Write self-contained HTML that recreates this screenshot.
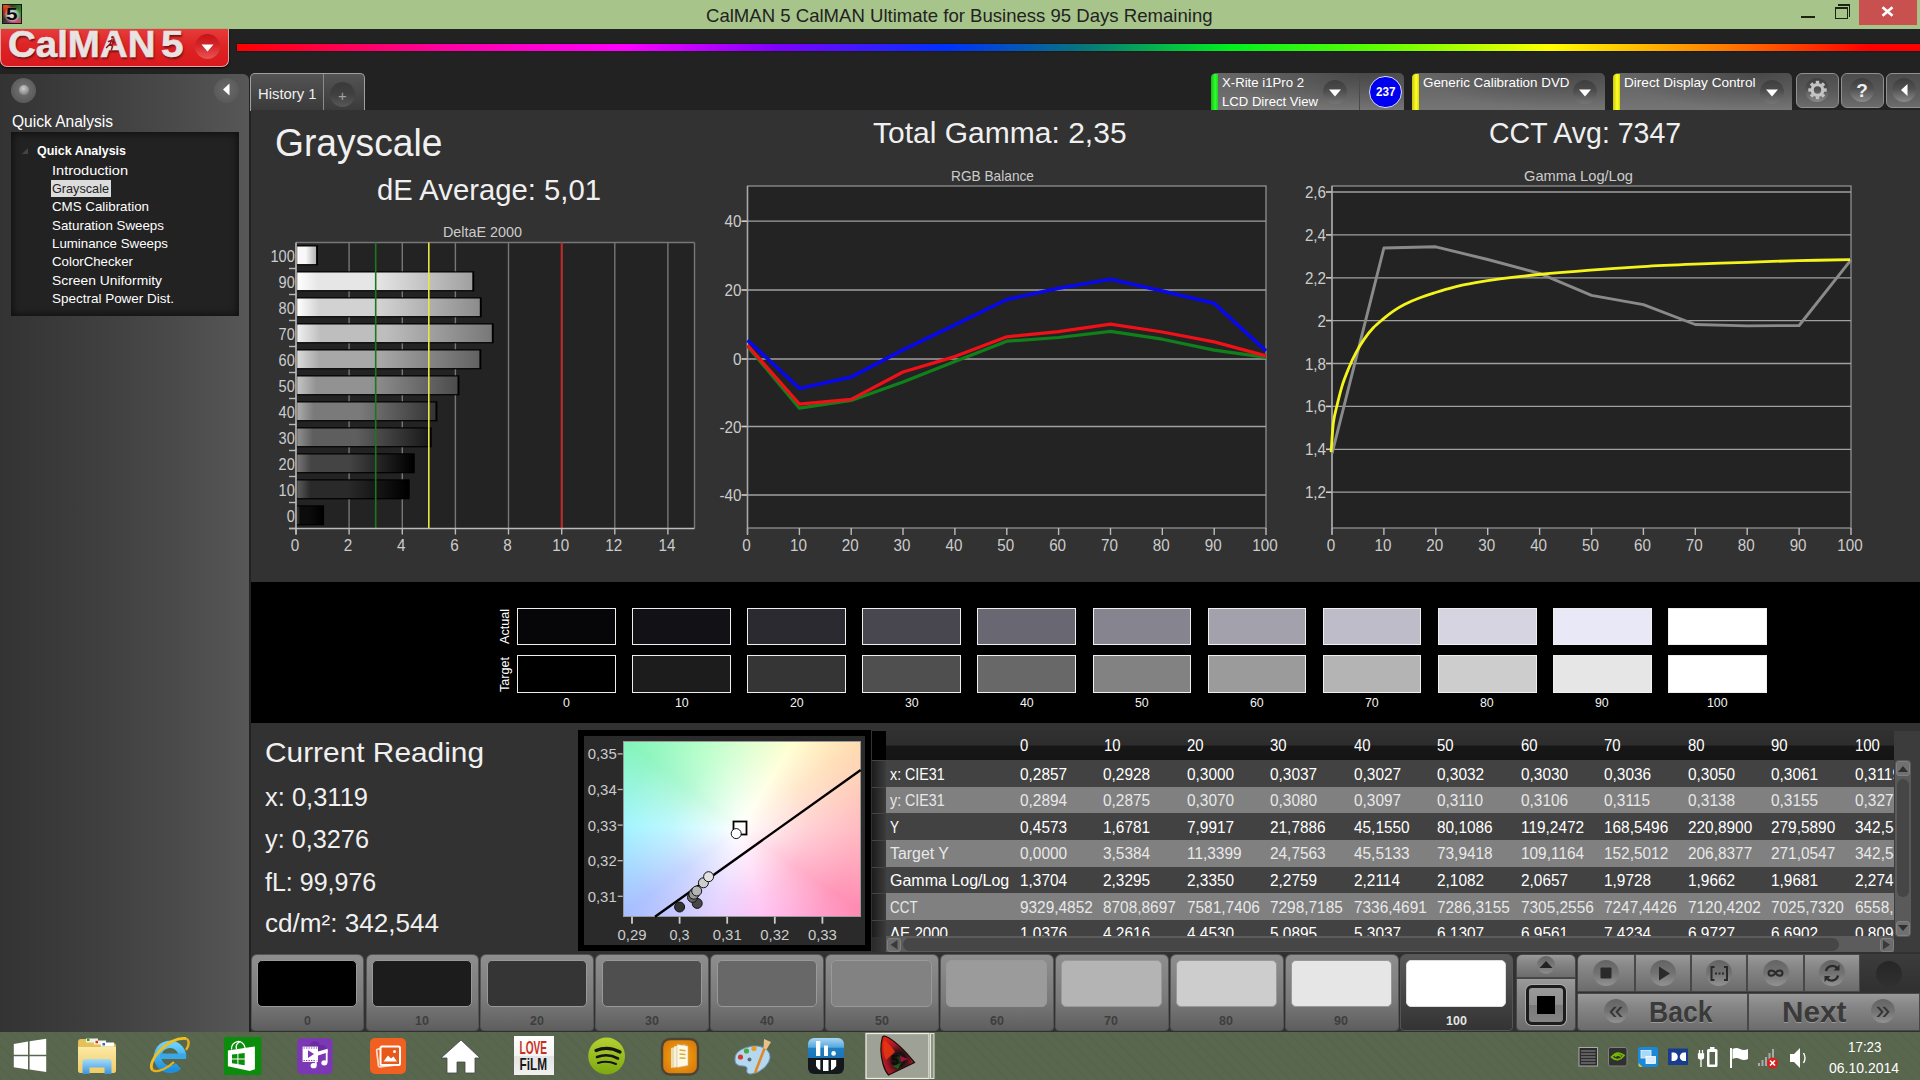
<!DOCTYPE html>
<html lang="en"><head><meta charset="utf-8"><title>CalMAN 5 CalMAN Ultimate for Business 95 Days Remaining</title>
<style>
html,body{margin:0;padding:0;width:1920px;height:1080px;overflow:hidden;background:#222;font-family:"Liberation Sans",sans-serif;}
.a{position:absolute;box-sizing:border-box;}
.t{position:absolute;white-space:nowrap;line-height:1;transform-origin:0 0;}
svg{position:absolute;left:0;top:0;overflow:visible;}
svg text{font-family:"Liberation Sans",sans-serif;}
</style></head><body>

<div class="a" style="left:0;top:0;width:1920px;height:29px;background:#a7c58b;"></div>
<div class="a" style="left:0;top:29px;width:1920px;height:1004px;background:#222222;"></div>
<div class="a" style="left:2px;top:4px;width:20px;height:20px;background:radial-gradient(circle at 50% 55%,#eee 0%,#ccc 30%,rgba(200,200,200,0) 62%),conic-gradient(from 0deg,#304020,#38a030 25%,#e04070 42%,#803060 55%,#303030 65%,#c02010 80%,#e05020 90%,#304020);border:1px solid #181818;"></div>
<span class="t" style="left:5.5px;top:6.1px;font-size:17px;color:#080808;font-weight:bold;transform:scaleX(1.216);">5</span>
<span class="t" style="left:706.0px;top:5.6px;font-size:19px;color:#222;transform:scaleX(0.977);">CalMAN 5 CalMAN Ultimate for Business 95 Days Remaining</span>
<div class="a" style="left:1801px;top:16px;width:14px;height:2.200px;background:#1c2414;"></div>
<div class="a" style="left:1837.500px;top:4.200px;width:12.500px;height:12.500px;border-top:2px solid #1c2414;border-right:1.200px solid #1c2414;"></div>
<div class="a" style="left:1835px;top:7.300px;width:12.500px;height:11.300px;border:1.200px solid #1c2414;border-top:2.600px solid #1c2414;background:#a7c58b;"></div>
<div class="a" style="left:1859px;top:0;width:58px;height:24.500px;background:#c8504f;"></div>
<svg width="1920" height="30"><path d="M1882.500 7.300 L1892.500 15.700 M1892.500 7.300 L1882.500 15.700" stroke="#fff" stroke-width="2.700" fill="none"/></svg>
<div class="a" style="left:0;top:29px;width:229px;height:38px;border-radius:0 0 7px 7px;background:linear-gradient(#e63c3c 0%,#de2424 45%,#d81a1e 100%);border:1px solid #e8a0a0;border-top:none;box-shadow:0 1px 2px #000;"></div>
<span class="t" style="left:7.8px;top:27.2px;font-size:36.3px;color:#e8e2e2;font-weight:bold;transform:scaleX(1.060);-webkit-text-stroke:0.6px #e8e2e2;text-shadow:1px 2px 2px #701010;">CalMAN</span>
<span class="t" style="left:160.8px;top:27.2px;font-size:36.3px;color:#e8e2e2;font-weight:bold;transform:scaleX(1.114);-webkit-text-stroke:0.6px #e8e2e2;text-shadow:1px 2px 2px #701010;">5</span>
<div class="a" style="left:195px;top:34px;width:25px;height:25px;border-radius:50%;background:linear-gradient(#c41418 0%,#d42428 45%,#ea5454 100%);"></div>
<svg width="300" height="80"><path d="M201.500 44.500 L213.500 44.500 L207.500 51.500 Z" fill="#fff"/><g stroke="#8a1818" stroke-width="1.500" fill="none" stroke-linecap="round"><circle cx="112.500" cy="37.300" r="1.300" fill="#8a1818" stroke="none"/><path d="M112 39.500 L110 44 L112.500 46.500 L111.500 49.500 M110 44 L106.500 47.500 M108.500 41.500 L111.500 40.500 L114.500 42.500"/></g></svg>
<div class="a" style="left:237px;top:44px;width:1683px;height:7px;background:linear-gradient(90deg,#f00 0%,#ff00a0 12%,#ff00ff 23%,#8000ff 32%,#0030ff 42%,#087878 50.500%,#00f020 59%,#60ff00 68%,#ffff00 78%,#ff8000 88%,#ff0000 97%,#ff0000 100%);box-shadow:0 0 2px rgba(0,0,0,.6);"></div>
<div class="a" style="left:0;top:74px;width:249px;height:959px;border-radius:0 6px 0 0;background:linear-gradient(90deg,#333 0%,#3f3f3f 40%,#4c4c4c 75%,#575757 100%);"></div>
<div class="a" style="left:11px;top:78px;width:25px;height:25px;border-radius:50%;background:radial-gradient(circle at 50% 45%,#777 0%,#5e5e5e 60%,#585858 100%);"></div>
<div class="a" style="left:19px;top:85px;width:10px;height:10px;border-radius:50%;background:radial-gradient(circle at 45% 35%,#ccc,#888 70%,#777);"></div>
<div class="a" style="left:214px;top:78px;width:25px;height:25px;border-radius:50%;background:radial-gradient(circle at 50% 45%,#6a6a6a 0%,#5a5a5a 70%,#555 100%);"></div>
<svg width="260" height="120"><path d="M223 89.5 L229.5 83.5 L229.5 95.5 Z" fill="#fff"/></svg>
<span class="t" style="left:11.7px;top:113.5px;font-size:16px;color:#fff;transform:scaleX(0.971);">Quick Analysis</span>
<div class="a" style="left:11px;top:132px;width:228px;height:184px;background:#222;box-shadow:inset 0 0 6px 2px #111;"></div>
<svg width="260" height="330"><path d="M28 148 L28 154 L22 154 Z" fill="#444"/></svg>
<span class="t" style="left:36.7px;top:144.0px;font-size:13px;color:#fff;font-weight:bold;transform:scaleX(0.960);">Quick Analysis</span>
<span class="t" style="left:52.0px;top:164.0px;font-size:13px;color:#fff;transform:scaleX(1.119);">Introduction</span>
<div class="a" style="left:51px;top:180px;width:60px;height:17px;background:#dcdcdc;"></div>
<span class="t" style="left:52.0px;top:182.3px;font-size:13px;color:#222;transform:scaleX(0.974);">Grayscale</span>
<span class="t" style="left:52.0px;top:200.0px;font-size:13px;color:#fff;transform:scaleX(1.025);">CMS Calibration</span>
<span class="t" style="left:52.0px;top:219.0px;font-size:13px;color:#fff;transform:scaleX(1.026);">Saturation Sweeps</span>
<span class="t" style="left:52.0px;top:237.3px;font-size:13px;color:#fff;transform:scaleX(1.022);">Luminance Sweeps</span>
<span class="t" style="left:52.0px;top:255.0px;font-size:13px;color:#fff;transform:scaleX(1.019);">ColorChecker</span>
<span class="t" style="left:52.0px;top:274.0px;font-size:13px;color:#fff;transform:scaleX(1.065);">Screen Uniformity</span>
<span class="t" style="left:52.0px;top:292.3px;font-size:13px;color:#fff;transform:scaleX(1.036);">Spectral Power Dist.</span>
<div class="a" style="left:250px;top:73px;width:115px;height:38px;border-radius:5px 5px 0 0;background:linear-gradient(#545454,#3a3a3a);border:1.300px solid #a0a0a0;border-bottom:none;"></div>
<div class="a" style="left:322.800px;top:74px;width:1.300px;height:36px;background:#8c8c8c;"></div>
<span class="t" style="left:257.7px;top:86.3px;font-size:15px;color:#eee;transform:scaleX(0.988);">History 1</span>
<div class="a" style="left:330px;top:82px;width:25px;height:25px;border-radius:50%;background:linear-gradient(#3a3a3a,#404040 50%,#585858);"></div>
<span class="t" style="left:338.0px;top:87.8px;font-size:15px;color:#a0a0a0;">+</span>
<div class="a" style="left:1211px;top:73px;width:193px;height:37px;border-radius:5px 5px 0 0;background:radial-gradient(ellipse 75% 100% at 80% 0%,rgba(0,0,0,.30) 0%,rgba(0,0,0,.12) 55%,rgba(0,0,0,0) 100%),linear-gradient(#666 0%,#6a6a6a 50%,#757575 100%);"></div>
<div class="a" style="left:1211px;top:74px;width:7px;height:36px;border-radius:4px 0 0 0;background:linear-gradient(90deg,#10c010,#30ff30 60%,#20d020);"></div>
<span class="t" style="left:1222.0px;top:76.3px;font-size:13px;color:#fff;transform:scaleX(1.013);">X-Rite i1Pro 2</span>
<span class="t" style="left:1222.0px;top:95.3px;font-size:13px;color:#fff;transform:scaleX(1.009);">LCD Direct View</span>
<div class="a" style="left:1323px;top:80px;width:24px;height:24px;border-radius:50%;background:linear-gradient(#3e3e3e 0%,#4a4a4a 40%,#767676 100%);"></div><svg width="1920" height="120"><path d="M1329 89.5 L1341 89.5 L1335 96.5 Z" fill="#fff"/></svg>
<div class="a" style="left:1359px;top:76px;width:1px;height:34px;background:#4a4a4a;"></div>
<div class="a" style="left:1369px;top:75.500px;width:32.500px;height:32.500px;border-radius:50%;background:#0000f0;border:1.500px solid #dde;"></div>
<span class="t" style="left:1375.5px;top:85.8px;font-size:12px;color:#fff;font-weight:bold;transform:scaleX(0.974);">237</span>
<div class="a" style="left:1412px;top:73px;width:193px;height:37px;border-radius:5px 5px 0 0;background:radial-gradient(ellipse 75% 100% at 80% 0%,rgba(0,0,0,.30) 0%,rgba(0,0,0,.12) 55%,rgba(0,0,0,0) 100%),linear-gradient(#666 0%,#6a6a6a 50%,#757575 100%);"></div>
<div class="a" style="left:1412px;top:74px;width:7px;height:36px;border-radius:4px 0 0 0;background:linear-gradient(90deg,#c8c800,#ffff30 60%,#d8d800);"></div>
<span class="t" style="left:1422.7px;top:76.3px;font-size:13px;color:#fff;transform:scaleX(1.029);">Generic Calibration DVD</span>
<div class="a" style="left:1573px;top:80px;width:24px;height:24px;border-radius:50%;background:linear-gradient(#3e3e3e 0%,#4a4a4a 40%,#767676 100%);"></div><svg width="1920" height="120"><path d="M1579 89.5 L1591 89.5 L1585 96.5 Z" fill="#fff"/></svg>
<div class="a" style="left:1613px;top:73px;width:179px;height:37px;border-radius:5px 5px 0 0;background:radial-gradient(ellipse 75% 100% at 80% 0%,rgba(0,0,0,.30) 0%,rgba(0,0,0,.12) 55%,rgba(0,0,0,0) 100%),linear-gradient(#666 0%,#6a6a6a 50%,#757575 100%);"></div>
<div class="a" style="left:1613px;top:74px;width:7px;height:36px;border-radius:4px 0 0 0;background:linear-gradient(90deg,#c8c800,#ffff30 60%,#d8d800);"></div>
<span class="t" style="left:1624.3px;top:76.3px;font-size:13px;color:#fff;transform:scaleX(1.046);">Direct Display Control</span>
<div class="a" style="left:1760px;top:80px;width:24px;height:24px;border-radius:50%;background:linear-gradient(#3e3e3e 0%,#4a4a4a 40%,#767676 100%);"></div><svg width="1920" height="120"><path d="M1766 89.5 L1778 89.5 L1772 96.5 Z" fill="#fff"/></svg>
<div class="a" style="left:1796px;top:73px;width:43px;height:35px;border-radius:6px;background:linear-gradient(#4c4c4c 0%,#585858 50%,#6c6c6c 100%);border:1.500px solid #909090;"></div>
<div class="a" style="left:1841px;top:73px;width:43px;height:35px;border-radius:6px;background:linear-gradient(#4c4c4c 0%,#585858 50%,#6c6c6c 100%);border:1.500px solid #909090;"></div>
<div class="a" style="left:1886px;top:73px;width:43px;height:35px;border-radius:6px;background:linear-gradient(#4c4c4c 0%,#585858 50%,#6c6c6c 100%);border:1.500px solid #909090;"></div>
<div class="a" style="left:1805px;top:78px;width:24px;height:24px;border-radius:50%;background:linear-gradient(#3e3e3e 0%,#505050 45%,#8a8a8a 100%);"></div>
<div class="a" style="left:1850px;top:78px;width:24px;height:24px;border-radius:50%;background:linear-gradient(#3e3e3e 0%,#505050 45%,#8a8a8a 100%);"></div>
<div class="a" style="left:1892px;top:78px;width:24px;height:24px;border-radius:50%;background:linear-gradient(#3e3e3e 0%,#505050 45%,#8a8a8a 100%);"></div>
<svg width="1920" height="120"><g transform="translate(1817.5,90)" fill="none" stroke="#c4c4c4"><circle r="5.300" stroke-width="3.200"/><g stroke-width="3.400"><path d="M0 -6.500 L0 -9.200" transform="rotate(0)"/><path d="M0 -6.500 L0 -9.200" transform="rotate(45)"/><path d="M0 -6.500 L0 -9.200" transform="rotate(90)"/><path d="M0 -6.500 L0 -9.200" transform="rotate(135)"/><path d="M0 -6.500 L0 -9.200" transform="rotate(180)"/><path d="M0 -6.500 L0 -9.200" transform="rotate(225)"/><path d="M0 -6.500 L0 -9.200" transform="rotate(270)"/><path d="M0 -6.500 L0 -9.200" transform="rotate(315)"/></g></g><path d="M1901 90 L1907.5 84 L1907.5 96 Z" fill="#fff"/></svg>
<span class="t" style="left:1856.2px;top:80.9px;font-size:19px;color:#eee;font-weight:bold;">?</span>
<div class="a" style="left:251px;top:110px;width:1669px;height:472px;background:#323232;"></div>
<span class="t" style="left:275.0px;top:124.1px;font-size:38px;color:#f0f0f0;transform:scaleX(0.979);">Grayscale</span>
<span class="t" style="left:377.0px;top:176.0px;font-size:29px;color:#f0f0f0;transform:scaleX(1.009);">dE Average: 5,01</span>
<span class="t" style="left:873.0px;top:118.7px;font-size:29px;color:#f0f0f0;transform:scaleX(1.035);">Total Gamma: 2,35</span>
<span class="t" style="left:1489.0px;top:118.7px;font-size:29px;color:#f0f0f0;transform:scaleX(0.982);">CCT Avg: 7347</span>
<svg width="1920" height="600">
<defs>
<linearGradient id="b0" x1="0" x2="1" y1="0" y2="0"><stop offset="0" stop-color="#ffffff"/><stop offset="0.120" stop-color="#f8f8f8"/><stop offset="0.450" stop-color="#f8f8f8"/><stop offset="1" stop-color="#b2b2b2"/></linearGradient>
<linearGradient id="b1" x1="0" x2="1" y1="0" y2="0"><stop offset="0" stop-color="#ffffff"/><stop offset="0.120" stop-color="#e6e6e6"/><stop offset="0.450" stop-color="#e6e6e6"/><stop offset="1" stop-color="#a0a0a0"/></linearGradient>
<linearGradient id="b2" x1="0" x2="1" y1="0" y2="0"><stop offset="0" stop-color="#ffffff"/><stop offset="0.120" stop-color="#d2d2d2"/><stop offset="0.450" stop-color="#d2d2d2"/><stop offset="1" stop-color="#8c8c8c"/></linearGradient>
<linearGradient id="b3" x1="0" x2="1" y1="0" y2="0"><stop offset="0" stop-color="#f0f0f0"/><stop offset="0.120" stop-color="#bebebe"/><stop offset="0.450" stop-color="#bebebe"/><stop offset="1" stop-color="#787878"/></linearGradient>
<linearGradient id="b4" x1="0" x2="1" y1="0" y2="0"><stop offset="0" stop-color="#dadada"/><stop offset="0.120" stop-color="#a8a8a8"/><stop offset="0.450" stop-color="#a8a8a8"/><stop offset="1" stop-color="#626262"/></linearGradient>
<linearGradient id="b5" x1="0" x2="1" y1="0" y2="0"><stop offset="0" stop-color="#c4c4c4"/><stop offset="0.120" stop-color="#929292"/><stop offset="0.450" stop-color="#929292"/><stop offset="1" stop-color="#4c4c4c"/></linearGradient>
<linearGradient id="b6" x1="0" x2="1" y1="0" y2="0"><stop offset="0" stop-color="#acacac"/><stop offset="0.120" stop-color="#7a7a7a"/><stop offset="0.450" stop-color="#7a7a7a"/><stop offset="1" stop-color="#343434"/></linearGradient>
<linearGradient id="b7" x1="0" x2="1" y1="0" y2="0"><stop offset="0" stop-color="#909090"/><stop offset="0.120" stop-color="#5e5e5e"/><stop offset="0.450" stop-color="#5e5e5e"/><stop offset="1" stop-color="#181818"/></linearGradient>
<linearGradient id="b8" x1="0" x2="1" y1="0" y2="0"><stop offset="0" stop-color="#767676"/><stop offset="0.120" stop-color="#444"/><stop offset="0.450" stop-color="#444"/><stop offset="1" stop-color="#000000"/></linearGradient>
<linearGradient id="b9" x1="0" x2="1" y1="0" y2="0"><stop offset="0" stop-color="#5c5c5c"/><stop offset="0.120" stop-color="#2a2a2a"/><stop offset="0.450" stop-color="#2a2a2a"/><stop offset="1" stop-color="#000000"/></linearGradient>
<linearGradient id="b10" x1="0" x2="1" y1="0" y2="0"><stop offset="0" stop-color="#3e3e3e"/><stop offset="0.120" stop-color="#0c0c0c"/><stop offset="0.450" stop-color="#0c0c0c"/><stop offset="1" stop-color="#000000"/></linearGradient>
</defs>
<rect x="296.0" y="242.5" width="398.5" height="286.0" fill="#232323"/>
<path d="M349.1 242.5 V528.5" stroke="#777" stroke-width="1.4"/>
<path d="M402.3 242.5 V528.5" stroke="#777" stroke-width="1.4"/>
<path d="M455.4 242.5 V528.5" stroke="#777" stroke-width="1.4"/>
<path d="M508.5 242.5 V528.5" stroke="#777" stroke-width="1.4"/>
<path d="M561.7 242.5 V528.5" stroke="#777" stroke-width="1.4"/>
<path d="M614.8 242.5 V528.5" stroke="#777" stroke-width="1.4"/>
<path d="M667.9 242.5 V528.5" stroke="#777" stroke-width="1.4"/>
<path d="M694.5 242.5 V528.5" stroke="#777" stroke-width="1.4"/>
<path d="M296.0 242.5 H694.5" stroke="#777" stroke-width="1.4"/>
<rect x="296.5" y="245.3" width="21.5" height="20" fill="#000"/>
<rect x="297.2" y="246.5" width="18.9" height="17.600" fill="url(#b0)"/>
<path d="M289.0 268.5 H296.0" stroke="#bbb" stroke-width="1.4"/>
<text x="294.8" y="261.7" font-size="16" fill="#ccc" text-anchor="end" textLength="24.3" lengthAdjust="spacingAndGlyphs">100</text>
<rect x="296.5" y="271.3" width="177.7" height="20" fill="#000"/>
<rect x="297.2" y="272.5" width="175.1" height="17.600" fill="url(#b1)"/>
<path d="M289.0 294.5 H296.0" stroke="#bbb" stroke-width="1.4"/>
<text x="294.8" y="287.7" font-size="16" fill="#ccc" text-anchor="end" textLength="16.2" lengthAdjust="spacingAndGlyphs">90</text>
<rect x="296.5" y="297.3" width="185.2" height="20" fill="#000"/>
<rect x="297.2" y="298.5" width="182.6" height="17.600" fill="url(#b2)"/>
<path d="M289.0 320.5 H296.0" stroke="#bbb" stroke-width="1.4"/>
<text x="294.8" y="313.7" font-size="16" fill="#ccc" text-anchor="end" textLength="16.2" lengthAdjust="spacingAndGlyphs">80</text>
<rect x="296.5" y="323.3" width="197.2" height="20" fill="#000"/>
<rect x="297.2" y="324.5" width="194.6" height="17.600" fill="url(#b3)"/>
<path d="M289.0 346.5 H296.0" stroke="#bbb" stroke-width="1.4"/>
<text x="294.8" y="339.7" font-size="16" fill="#ccc" text-anchor="end" textLength="16.2" lengthAdjust="spacingAndGlyphs">70</text>
<rect x="296.5" y="349.3" width="184.8" height="20" fill="#000"/>
<rect x="297.2" y="350.5" width="182.2" height="17.600" fill="url(#b4)"/>
<path d="M289.0 372.5 H296.0" stroke="#bbb" stroke-width="1.4"/>
<text x="294.8" y="365.7" font-size="16" fill="#ccc" text-anchor="end" textLength="16.2" lengthAdjust="spacingAndGlyphs">60</text>
<rect x="296.5" y="375.3" width="162.9" height="20" fill="#000"/>
<rect x="297.2" y="376.5" width="160.3" height="17.600" fill="url(#b5)"/>
<path d="M289.0 398.5 H296.0" stroke="#bbb" stroke-width="1.4"/>
<text x="294.8" y="391.7" font-size="16" fill="#ccc" text-anchor="end" textLength="16.2" lengthAdjust="spacingAndGlyphs">50</text>
<rect x="296.5" y="401.3" width="140.9" height="20" fill="#000"/>
<rect x="297.2" y="402.5" width="138.3" height="17.600" fill="url(#b6)"/>
<path d="M289.0 424.5 H296.0" stroke="#bbb" stroke-width="1.4"/>
<text x="294.8" y="417.7" font-size="16" fill="#ccc" text-anchor="end" textLength="16.2" lengthAdjust="spacingAndGlyphs">40</text>
<rect x="296.5" y="427.3" width="135.2" height="20" fill="#000"/>
<rect x="297.2" y="428.5" width="132.6" height="17.600" fill="url(#b7)"/>
<path d="M289.0 450.5 H296.0" stroke="#bbb" stroke-width="1.4"/>
<text x="294.8" y="443.7" font-size="16" fill="#ccc" text-anchor="end" textLength="16.2" lengthAdjust="spacingAndGlyphs">30</text>
<rect x="296.5" y="453.3" width="118.3" height="20" fill="#000"/>
<rect x="297.2" y="454.5" width="115.7" height="17.600" fill="url(#b8)"/>
<path d="M289.0 476.5 H296.0" stroke="#bbb" stroke-width="1.4"/>
<text x="294.8" y="469.7" font-size="16" fill="#ccc" text-anchor="end" textLength="16.2" lengthAdjust="spacingAndGlyphs">20</text>
<rect x="296.5" y="479.3" width="113.2" height="20" fill="#000"/>
<rect x="297.2" y="480.5" width="110.6" height="17.600" fill="url(#b9)"/>
<path d="M289.0 502.5 H296.0" stroke="#bbb" stroke-width="1.4"/>
<text x="294.8" y="495.7" font-size="16" fill="#ccc" text-anchor="end" textLength="16.2" lengthAdjust="spacingAndGlyphs">10</text>
<rect x="296.5" y="505.3" width="27.6" height="20" fill="#000"/>
<rect x="297.2" y="506.5" width="25.0" height="17.600" fill="url(#b10)"/>
<path d="M289.0 528.5 H296.0" stroke="#bbb" stroke-width="1.4"/>
<text x="294.8" y="521.7" font-size="16" fill="#ccc" text-anchor="end" textLength="8.1" lengthAdjust="spacingAndGlyphs">0</text>
<path d="M375.7 242.5 V528.5" stroke="#1a7a1a" stroke-width="1.6"/>
<path d="M428.8 242.5 V528.5" stroke="#e6e640" stroke-width="1.6"/>
<path d="M561.7 242.5 V528.5" stroke="#c02828" stroke-width="2"/>
<path d="M296.0 242.5 V534.5 M289.0 528.5 H694.5" stroke="#bbb" stroke-width="1.6" fill="none"/>
<path d="M296.0 528.5 v6" stroke="#bbb" stroke-width="1.4"/>
<text x="295.0" y="551.0" font-size="16" fill="#ccc" text-anchor="middle" textLength="8.5" lengthAdjust="spacingAndGlyphs">0</text>
<path d="M349.1 528.5 v6" stroke="#bbb" stroke-width="1.4"/>
<text x="348.1" y="551.0" font-size="16" fill="#ccc" text-anchor="middle" textLength="8.5" lengthAdjust="spacingAndGlyphs">2</text>
<path d="M402.3 528.5 v6" stroke="#bbb" stroke-width="1.4"/>
<text x="401.3" y="551.0" font-size="16" fill="#ccc" text-anchor="middle" textLength="8.5" lengthAdjust="spacingAndGlyphs">4</text>
<path d="M455.4 528.5 v6" stroke="#bbb" stroke-width="1.4"/>
<text x="454.4" y="551.0" font-size="16" fill="#ccc" text-anchor="middle" textLength="8.5" lengthAdjust="spacingAndGlyphs">6</text>
<path d="M508.5 528.5 v6" stroke="#bbb" stroke-width="1.4"/>
<text x="507.5" y="551.0" font-size="16" fill="#ccc" text-anchor="middle" textLength="8.5" lengthAdjust="spacingAndGlyphs">8</text>
<path d="M561.7 528.5 v6" stroke="#bbb" stroke-width="1.4"/>
<text x="560.7" y="551.0" font-size="16" fill="#ccc" text-anchor="middle" textLength="16.9" lengthAdjust="spacingAndGlyphs">10</text>
<path d="M614.8 528.5 v6" stroke="#bbb" stroke-width="1.4"/>
<text x="613.8" y="551.0" font-size="16" fill="#ccc" text-anchor="middle" textLength="16.9" lengthAdjust="spacingAndGlyphs">12</text>
<path d="M667.9 528.5 v6" stroke="#bbb" stroke-width="1.4"/>
<text x="666.9" y="551.0" font-size="16" fill="#ccc" text-anchor="middle" textLength="16.9" lengthAdjust="spacingAndGlyphs">14</text>
<text x="482.5" y="237.0" font-size="15" fill="#ccc" text-anchor="middle" textLength="79.0" lengthAdjust="spacingAndGlyphs">DeltaE 2000</text>
<rect x="747.5" y="186.0" width="518.5" height="342.0" fill="#232323" stroke="#909090" stroke-width="1.300"/>
<path d="M747.5 221.2 H1266.0" stroke="#a0a0a0" stroke-width="1.300"/><path d="M741.5 221.2 H747.5" stroke="#d0d0d0" stroke-width="1.600"/>
<text x="741.5" y="227.2" font-size="16" fill="#ccc" text-anchor="end" textLength="16.9" lengthAdjust="spacingAndGlyphs">40</text>
<path d="M747.5 290.0 H1266.0" stroke="#a0a0a0" stroke-width="1.300"/><path d="M741.5 290.0 H747.5" stroke="#d0d0d0" stroke-width="1.600"/>
<text x="741.5" y="296.0" font-size="16" fill="#ccc" text-anchor="end" textLength="16.9" lengthAdjust="spacingAndGlyphs">20</text>
<path d="M747.5 359.0 H1266.0" stroke="#a0a0a0" stroke-width="1.300"/><path d="M741.5 359.0 H747.5" stroke="#d0d0d0" stroke-width="1.600"/>
<text x="741.5" y="365.0" font-size="16" fill="#ccc" text-anchor="end" textLength="8.5" lengthAdjust="spacingAndGlyphs">0</text>
<path d="M747.5 426.5 H1266.0" stroke="#a0a0a0" stroke-width="1.300"/><path d="M741.5 426.5 H747.5" stroke="#d0d0d0" stroke-width="1.600"/>
<text x="741.5" y="432.5" font-size="16" fill="#ccc" text-anchor="end" textLength="22.0" lengthAdjust="spacingAndGlyphs">-20</text>
<path d="M747.5 495.0 H1266.0" stroke="#a0a0a0" stroke-width="1.300"/><path d="M741.5 495.0 H747.5" stroke="#d0d0d0" stroke-width="1.600"/>
<text x="741.5" y="501.0" font-size="16" fill="#ccc" text-anchor="end" textLength="22.0" lengthAdjust="spacingAndGlyphs">-40</text>
<path d="M747.5 528.0 v7" stroke="#bbb" stroke-width="1.4"/>
<text x="746.5" y="551.0" font-size="16" fill="#ccc" text-anchor="middle" textLength="8.5" lengthAdjust="spacingAndGlyphs">0</text>
<path d="M799.4 528.0 v7" stroke="#bbb" stroke-width="1.4"/>
<text x="798.4" y="551.0" font-size="16" fill="#ccc" text-anchor="middle" textLength="16.9" lengthAdjust="spacingAndGlyphs">10</text>
<path d="M851.2 528.0 v7" stroke="#bbb" stroke-width="1.4"/>
<text x="850.2" y="551.0" font-size="16" fill="#ccc" text-anchor="middle" textLength="16.9" lengthAdjust="spacingAndGlyphs">20</text>
<path d="M903.0 528.0 v7" stroke="#bbb" stroke-width="1.4"/>
<text x="902.0" y="551.0" font-size="16" fill="#ccc" text-anchor="middle" textLength="16.9" lengthAdjust="spacingAndGlyphs">30</text>
<path d="M954.9 528.0 v7" stroke="#bbb" stroke-width="1.4"/>
<text x="953.9" y="551.0" font-size="16" fill="#ccc" text-anchor="middle" textLength="16.9" lengthAdjust="spacingAndGlyphs">40</text>
<path d="M1006.8 528.0 v7" stroke="#bbb" stroke-width="1.4"/>
<text x="1005.8" y="551.0" font-size="16" fill="#ccc" text-anchor="middle" textLength="16.9" lengthAdjust="spacingAndGlyphs">50</text>
<path d="M1058.6 528.0 v7" stroke="#bbb" stroke-width="1.4"/>
<text x="1057.6" y="551.0" font-size="16" fill="#ccc" text-anchor="middle" textLength="16.9" lengthAdjust="spacingAndGlyphs">60</text>
<path d="M1110.5 528.0 v7" stroke="#bbb" stroke-width="1.4"/>
<text x="1109.5" y="551.0" font-size="16" fill="#ccc" text-anchor="middle" textLength="16.9" lengthAdjust="spacingAndGlyphs">70</text>
<path d="M1162.3 528.0 v7" stroke="#bbb" stroke-width="1.4"/>
<text x="1161.3" y="551.0" font-size="16" fill="#ccc" text-anchor="middle" textLength="16.9" lengthAdjust="spacingAndGlyphs">80</text>
<path d="M1214.2 528.0 v7" stroke="#bbb" stroke-width="1.4"/>
<text x="1213.2" y="551.0" font-size="16" fill="#ccc" text-anchor="middle" textLength="16.9" lengthAdjust="spacingAndGlyphs">90</text>
<path d="M1266.0 528.0 v7" stroke="#bbb" stroke-width="1.4"/>
<text x="1265.0" y="551.0" font-size="16" fill="#ccc" text-anchor="middle" textLength="25.4" lengthAdjust="spacingAndGlyphs">100</text>
<path d="M747.5 186.0 V534.0" stroke="#a8a8a8" stroke-width="1.400"/>
<polyline points="747.5,346.3 799.4,408.2 851.2,400.4 903.0,381.9 954.9,361.4 1006.8,341.2 1058.6,337.5 1110.5,331.3 1162.3,339.2 1214.2,350.1 1266.0,357.3" fill="none" stroke="#10801a" stroke-width="3.2" stroke-linejoin="round"/>
<polyline points="747.5,345.3 799.4,404.1 851.2,399.4 903.0,372.0 954.9,356.6 1006.8,336.8 1058.6,331.6 1110.5,324.1 1162.3,332.0 1214.2,341.9 1266.0,355.9" fill="none" stroke="#f01018" stroke-width="3.2" stroke-linejoin="round"/>
<polyline points="747.5,340.2 799.4,388.4 851.2,377.1 903.0,349.8 954.9,324.8 1006.8,299.5 1058.6,288.2 1110.5,279.3 1162.3,290.9 1214.2,303.3 1266.0,350.8" fill="none" stroke="#0808e8" stroke-width="3.6" stroke-linejoin="round"/>
<text x="992.5" y="181.0" font-size="15" fill="#ccc" text-anchor="middle" textLength="83.0" lengthAdjust="spacingAndGlyphs">RGB Balance</text>
<rect x="1332.0" y="186.0" width="519.0" height="342.0" fill="#232323" stroke="#909090" stroke-width="1.300"/>
<path d="M1332.0 192.0 H1851.0" stroke="#a0a0a0" stroke-width="1.300"/><path d="M1326.0 192.0 H1332.0" stroke="#d0d0d0" stroke-width="1.600"/>
<text x="1326.0" y="198.0" font-size="16" fill="#ccc" text-anchor="end" textLength="21.1" lengthAdjust="spacingAndGlyphs">2,6</text>
<path d="M1332.0 234.9 H1851.0" stroke="#a0a0a0" stroke-width="1.300"/><path d="M1326.0 234.9 H1332.0" stroke="#d0d0d0" stroke-width="1.600"/>
<text x="1326.0" y="240.9" font-size="16" fill="#ccc" text-anchor="end" textLength="21.1" lengthAdjust="spacingAndGlyphs">2,4</text>
<path d="M1332.0 277.8 H1851.0" stroke="#a0a0a0" stroke-width="1.300"/><path d="M1326.0 277.8 H1332.0" stroke="#d0d0d0" stroke-width="1.600"/>
<text x="1326.0" y="283.8" font-size="16" fill="#ccc" text-anchor="end" textLength="21.1" lengthAdjust="spacingAndGlyphs">2,2</text>
<path d="M1332.0 320.6 H1851.0" stroke="#a0a0a0" stroke-width="1.300"/><path d="M1326.0 320.6 H1332.0" stroke="#d0d0d0" stroke-width="1.600"/>
<text x="1326.0" y="326.6" font-size="16" fill="#ccc" text-anchor="end" textLength="8.5" lengthAdjust="spacingAndGlyphs">2</text>
<path d="M1332.0 363.5 H1851.0" stroke="#a0a0a0" stroke-width="1.300"/><path d="M1326.0 363.5 H1332.0" stroke="#d0d0d0" stroke-width="1.600"/>
<text x="1326.0" y="369.5" font-size="16" fill="#ccc" text-anchor="end" textLength="21.1" lengthAdjust="spacingAndGlyphs">1,8</text>
<path d="M1332.0 406.4 H1851.0" stroke="#a0a0a0" stroke-width="1.300"/><path d="M1326.0 406.4 H1332.0" stroke="#d0d0d0" stroke-width="1.600"/>
<text x="1326.0" y="412.4" font-size="16" fill="#ccc" text-anchor="end" textLength="21.1" lengthAdjust="spacingAndGlyphs">1,6</text>
<path d="M1332.0 449.3 H1851.0" stroke="#a0a0a0" stroke-width="1.300"/><path d="M1326.0 449.3 H1332.0" stroke="#d0d0d0" stroke-width="1.600"/>
<text x="1326.0" y="455.3" font-size="16" fill="#ccc" text-anchor="end" textLength="21.1" lengthAdjust="spacingAndGlyphs">1,4</text>
<path d="M1332.0 492.2 H1851.0" stroke="#a0a0a0" stroke-width="1.300"/><path d="M1326.0 492.2 H1332.0" stroke="#d0d0d0" stroke-width="1.600"/>
<text x="1326.0" y="498.2" font-size="16" fill="#ccc" text-anchor="end" textLength="21.1" lengthAdjust="spacingAndGlyphs">1,2</text>
<path d="M1332.0 528.0 v7" stroke="#bbb" stroke-width="1.4"/>
<text x="1331.0" y="551.0" font-size="16" fill="#ccc" text-anchor="middle" textLength="8.5" lengthAdjust="spacingAndGlyphs">0</text>
<path d="M1383.9 528.0 v7" stroke="#bbb" stroke-width="1.4"/>
<text x="1382.9" y="551.0" font-size="16" fill="#ccc" text-anchor="middle" textLength="16.9" lengthAdjust="spacingAndGlyphs">10</text>
<path d="M1435.8 528.0 v7" stroke="#bbb" stroke-width="1.4"/>
<text x="1434.8" y="551.0" font-size="16" fill="#ccc" text-anchor="middle" textLength="16.9" lengthAdjust="spacingAndGlyphs">20</text>
<path d="M1487.7 528.0 v7" stroke="#bbb" stroke-width="1.4"/>
<text x="1486.7" y="551.0" font-size="16" fill="#ccc" text-anchor="middle" textLength="16.9" lengthAdjust="spacingAndGlyphs">30</text>
<path d="M1539.6 528.0 v7" stroke="#bbb" stroke-width="1.4"/>
<text x="1538.6" y="551.0" font-size="16" fill="#ccc" text-anchor="middle" textLength="16.9" lengthAdjust="spacingAndGlyphs">40</text>
<path d="M1591.5 528.0 v7" stroke="#bbb" stroke-width="1.4"/>
<text x="1590.5" y="551.0" font-size="16" fill="#ccc" text-anchor="middle" textLength="16.9" lengthAdjust="spacingAndGlyphs">50</text>
<path d="M1643.4 528.0 v7" stroke="#bbb" stroke-width="1.4"/>
<text x="1642.4" y="551.0" font-size="16" fill="#ccc" text-anchor="middle" textLength="16.9" lengthAdjust="spacingAndGlyphs">60</text>
<path d="M1695.3 528.0 v7" stroke="#bbb" stroke-width="1.4"/>
<text x="1694.3" y="551.0" font-size="16" fill="#ccc" text-anchor="middle" textLength="16.9" lengthAdjust="spacingAndGlyphs">70</text>
<path d="M1747.2 528.0 v7" stroke="#bbb" stroke-width="1.4"/>
<text x="1746.2" y="551.0" font-size="16" fill="#ccc" text-anchor="middle" textLength="16.9" lengthAdjust="spacingAndGlyphs">80</text>
<path d="M1799.1 528.0 v7" stroke="#bbb" stroke-width="1.4"/>
<text x="1798.1" y="551.0" font-size="16" fill="#ccc" text-anchor="middle" textLength="16.9" lengthAdjust="spacingAndGlyphs">90</text>
<path d="M1851.0 528.0 v7" stroke="#bbb" stroke-width="1.4"/>
<text x="1850.0" y="551.0" font-size="16" fill="#ccc" text-anchor="middle" textLength="25.4" lengthAdjust="spacingAndGlyphs">100</text>
<path d="M1332.0 186.0 V534.0" stroke="#a8a8a8" stroke-width="1.400"/>
<polyline points="1332.0,453.6 1383.9,248.0 1435.8,246.8 1487.7,259.5 1539.6,273.3 1591.5,295.4 1643.4,304.6 1695.3,324.5 1747.2,325.9 1799.1,325.5 1851.0,259.9" fill="none" stroke="#8a8a8a" stroke-width="2.9" stroke-linejoin="round"/>
<path d="M1331.1 452.2 C1331.5 447.4 1332.4 430.9 1333.3 423.3 C1334.2 415.7 1335.2 413.0 1336.7 406.7 C1338.2 400.4 1340.2 392.1 1342.2 385.6 C1344.2 379.1 1346.7 373.2 1348.9 367.8 C1351.1 362.4 1353.0 358.1 1355.6 353.3 C1358.2 348.5 1361.5 343.1 1364.4 338.9 C1367.4 334.6 1370.2 331.1 1373.3 327.8 C1376.4 324.5 1380.0 321.7 1383.3 318.9 C1386.6 316.1 1389.8 313.5 1393.3 311.1 C1396.8 308.7 1400.0 306.6 1404.4 304.4 C1408.9 302.2 1415.0 299.7 1420.0 297.8 C1425.0 295.9 1428.9 294.6 1434.4 292.9 C1440.0 291.1 1446.4 289.0 1453.3 287.3 C1460.2 285.6 1467.8 284.1 1475.6 282.7 C1483.4 281.3 1489.5 280.3 1500.0 278.9 C1510.5 277.5 1523.8 276.0 1538.9 274.5 C1554.0 273.0 1573.3 271.4 1590.6 270.1 C1607.9 268.8 1625.4 267.6 1642.7 266.6 C1660.0 265.6 1677.2 264.9 1694.4 264.2 C1711.7 263.5 1728.9 262.9 1746.2 262.3 C1763.5 261.7 1781.0 261.1 1798.3 260.7 C1815.6 260.2 1841.4 259.8 1850.0 259.6" fill="none" stroke="#f4f41c" stroke-width="2.8" stroke-linejoin="round"/>
<text x="1578.5" y="181.0" font-size="15" fill="#ccc" text-anchor="middle" textLength="109.0" lengthAdjust="spacingAndGlyphs">Gamma Log/Log</text>
</svg>
<div class="a" style="left:251px;top:582px;width:1669px;height:141px;background:#000;"></div>
<div class="a" style="left:517.0px;top:608px;width:98.8px;height:37px;background:#060608;border:1.5px solid #eee;"></div>
<div class="a" style="left:517.0px;top:655px;width:98.8px;height:38px;background:#000000;border:1.5px solid #eee;"></div>
<span class="t" style="left:563.0px;top:696.3px;font-size:13px;color:#f4f4f4;transform:scaleX(0.950);">0</span>
<div class="a" style="left:632.1px;top:608px;width:98.8px;height:37px;background:#111116;border:1.5px solid #eee;"></div>
<div class="a" style="left:632.1px;top:655px;width:98.8px;height:38px;background:#1c1c1c;border:1.5px solid #eee;"></div>
<span class="t" style="left:674.6px;top:696.3px;font-size:13px;color:#f4f4f4;transform:scaleX(0.950);">10</span>
<div class="a" style="left:747.2px;top:608px;width:98.8px;height:37px;background:#2a2a30;border:1.5px solid #eee;"></div>
<div class="a" style="left:747.2px;top:655px;width:98.8px;height:38px;background:#353535;border:1.5px solid #eee;"></div>
<span class="t" style="left:789.7px;top:696.3px;font-size:13px;color:#f4f4f4;transform:scaleX(0.950);">20</span>
<div class="a" style="left:862.3px;top:608px;width:98.8px;height:37px;background:#48474f;border:1.5px solid #eee;"></div>
<div class="a" style="left:862.3px;top:655px;width:98.8px;height:38px;background:#4f4f4f;border:1.5px solid #eee;"></div>
<span class="t" style="left:904.8px;top:696.3px;font-size:13px;color:#f4f4f4;transform:scaleX(0.950);">30</span>
<div class="a" style="left:977.4px;top:608px;width:98.8px;height:37px;background:#696872;border:1.5px solid #eee;"></div>
<div class="a" style="left:977.4px;top:655px;width:98.8px;height:38px;background:#686868;border:1.5px solid #eee;"></div>
<span class="t" style="left:1019.9px;top:696.3px;font-size:13px;color:#f4f4f4;transform:scaleX(0.950);">40</span>
<div class="a" style="left:1092.5px;top:608px;width:98.8px;height:37px;background:#86858f;border:1.5px solid #eee;"></div>
<div class="a" style="left:1092.5px;top:655px;width:98.8px;height:38px;background:#828282;border:1.5px solid #eee;"></div>
<span class="t" style="left:1135.0px;top:696.3px;font-size:13px;color:#f4f4f4;transform:scaleX(0.950);">50</span>
<div class="a" style="left:1207.6px;top:608px;width:98.8px;height:37px;background:#a2a1ac;border:1.5px solid #eee;"></div>
<div class="a" style="left:1207.6px;top:655px;width:98.8px;height:38px;background:#9b9b9b;border:1.5px solid #eee;"></div>
<span class="t" style="left:1250.1px;top:696.3px;font-size:13px;color:#f4f4f4;transform:scaleX(0.950);">60</span>
<div class="a" style="left:1322.7px;top:608px;width:98.8px;height:37px;background:#bdbcc8;border:1.5px solid #eee;"></div>
<div class="a" style="left:1322.7px;top:655px;width:98.8px;height:38px;background:#b4b4b4;border:1.5px solid #eee;"></div>
<span class="t" style="left:1365.2px;top:696.3px;font-size:13px;color:#f4f4f4;transform:scaleX(0.950);">70</span>
<div class="a" style="left:1437.8px;top:608px;width:98.8px;height:37px;background:#d5d4e0;border:1.5px solid #eee;"></div>
<div class="a" style="left:1437.8px;top:655px;width:98.8px;height:38px;background:#cdcdcd;border:1.5px solid #eee;"></div>
<span class="t" style="left:1480.3px;top:696.3px;font-size:13px;color:#f4f4f4;transform:scaleX(0.950);">80</span>
<div class="a" style="left:1552.9px;top:608px;width:98.8px;height:37px;background:#e8e8f6;border:1.5px solid #eee;"></div>
<div class="a" style="left:1552.9px;top:655px;width:98.8px;height:38px;background:#e6e6e6;border:1.5px solid #eee;"></div>
<span class="t" style="left:1595.4px;top:696.3px;font-size:13px;color:#f4f4f4;transform:scaleX(0.950);">90</span>
<div class="a" style="left:1668.0px;top:608px;width:98.8px;height:37px;background:#ffffff;border:1.5px solid #eee;"></div>
<div class="a" style="left:1668.0px;top:655px;width:98.8px;height:38px;background:#ffffff;border:1.5px solid #eee;"></div>
<span class="t" style="left:1707.1px;top:696.3px;font-size:13px;color:#f4f4f4;transform:scaleX(0.950);">100</span>
<span class="t" style="left:498px;top:643.500px;font-size:13px;color:#fff;transform-origin:0 0;transform:rotate(-90deg) scaleX(0.97);">Actual</span>
<span class="t" style="left:498px;top:691.500px;font-size:13px;color:#fff;transform-origin:0 0;transform:rotate(-90deg) scaleX(0.97);">Target</span>
<div class="a" style="left:251px;top:723px;width:1669px;height:229px;background:#323232;"></div>
<span class="t" style="left:265.0px;top:738.6px;font-size:28px;color:#f0f0f0;transform:scaleX(1.066);">Current Reading</span>
<span class="t" style="left:265.0px;top:784.8px;font-size:25px;color:#f0f0f0;transform:scaleX(1.020);">x: 0,3119</span>
<span class="t" style="left:265.0px;top:826.5px;font-size:25px;color:#f0f0f0;transform:scaleX(1.011);">y: 0,3276</span>
<span class="t" style="left:265.0px;top:869.5px;font-size:25px;color:#f0f0f0;">fL: 99,976</span>
<span class="t" style="left:265.0px;top:911.1px;font-size:25px;color:#f0f0f0;transform:scaleX(1.043);">cd/m²: 342,544</span>
<div class="a" style="left:578px;top:730px;width:293px;height:221px;background:#2a2a2a;border:6px solid #000;"></div>
<div class="a" style="left:622.7px;top:740.7px;width:238.0px;height:176.0px;border:1px solid #999;background:radial-gradient(circle 150px at 49% 50%,rgba(255,255,255,1) 0%,rgba(255,255,255,.75) 18%,rgba(255,255,255,.38) 45%,rgba(255,255,255,.12) 75%,rgba(255,255,255,0) 100%),conic-gradient(from 0deg at 49% 50%,#c8ffc0 0deg,#ffffc8 32deg,#ffdcb0 54deg,#ffb4bc 90deg,#ff88b0 124deg,#ffb0f0 165deg,#dcc0ff 195deg,#a4bcff 234deg,#98f4ff 272deg,#80f4b8 308deg,#a0ffb8 335deg,#c8ffc0 360deg);"></div>
<svg width="1920" height="1080">
<path d="M617.7 753.9 H622.7" stroke="#bbb" stroke-width="1.3"/>
<text x="616.7" y="759.4" font-size="15" fill="#ccc" text-anchor="end" textLength="29.0" lengthAdjust="spacingAndGlyphs">0,35</text>
<path d="M617.7 789.5 H622.7" stroke="#bbb" stroke-width="1.3"/>
<text x="616.7" y="795.0" font-size="15" fill="#ccc" text-anchor="end" textLength="29.0" lengthAdjust="spacingAndGlyphs">0,34</text>
<path d="M617.7 825.1 H622.7" stroke="#bbb" stroke-width="1.3"/>
<text x="616.7" y="830.6" font-size="15" fill="#ccc" text-anchor="end" textLength="29.0" lengthAdjust="spacingAndGlyphs">0,33</text>
<path d="M617.7 860.7 H622.7" stroke="#bbb" stroke-width="1.3"/>
<text x="616.7" y="866.2" font-size="15" fill="#ccc" text-anchor="end" textLength="29.0" lengthAdjust="spacingAndGlyphs">0,32</text>
<path d="M617.7 896.3 H622.7" stroke="#bbb" stroke-width="1.3"/>
<text x="616.7" y="901.8" font-size="15" fill="#ccc" text-anchor="end" textLength="29.0" lengthAdjust="spacingAndGlyphs">0,31</text>
<path d="M632.0 916.7 v7" stroke="#ccc" stroke-width="1.8"/>
<text x="632.0" y="940.0" font-size="15" fill="#ccc" text-anchor="middle" textLength="29.0" lengthAdjust="spacingAndGlyphs">0,29</text>
<path d="M679.6 916.7 v7" stroke="#ccc" stroke-width="1.8"/>
<text x="679.6" y="940.0" font-size="15" fill="#ccc" text-anchor="middle" textLength="20.0" lengthAdjust="spacingAndGlyphs">0,3</text>
<path d="M727.2 916.7 v7" stroke="#ccc" stroke-width="1.8"/>
<text x="727.2" y="940.0" font-size="15" fill="#ccc" text-anchor="middle" textLength="29.0" lengthAdjust="spacingAndGlyphs">0,31</text>
<path d="M774.8 916.7 v7" stroke="#ccc" stroke-width="1.8"/>
<text x="774.8" y="940.0" font-size="15" fill="#ccc" text-anchor="middle" textLength="29.0" lengthAdjust="spacingAndGlyphs">0,32</text>
<path d="M822.4 916.7 v7" stroke="#ccc" stroke-width="1.8"/>
<text x="822.4" y="940.0" font-size="15" fill="#ccc" text-anchor="middle" textLength="29.0" lengthAdjust="spacingAndGlyphs">0,33</text>
<path d="M655 916.7 L860.7 770" stroke="#000" stroke-width="2.400"/>
<circle cx="679.6" cy="907.0" r="5" fill="#333" stroke="#111" stroke-width="1"/>
<circle cx="697.2" cy="903.4" r="5" fill="#484848" stroke="#111" stroke-width="1"/>
<circle cx="692.5" cy="897.4" r="5" fill="#666" stroke="#111" stroke-width="1"/>
<circle cx="694.8" cy="892.7" r="5" fill="#858585" stroke="#111" stroke-width="1"/>
<circle cx="693.9" cy="894.2" r="5" fill="#999" stroke="#111" stroke-width="1"/>
<circle cx="696.7" cy="891.0" r="5" fill="#b4b4b4" stroke="#111" stroke-width="1"/>
<circle cx="703.4" cy="882.8" r="5" fill="#cdcdcd" stroke="#111" stroke-width="1"/>
<circle cx="708.6" cy="876.7" r="5" fill="#e2e2e2" stroke="#111" stroke-width="1"/>
<rect x="733.5" y="821.5" width="13" height="13" fill="none" stroke="#000" stroke-width="1.8"/>
<circle cx="736.2" cy="833.6" r="5" fill="#fff" stroke="#111" stroke-width="1"/>
</svg>
<div class="a" style="left:872px;top:731px;width:14px;height:221px;background:linear-gradient(90deg,#2a2a2a,#3a3a3a);"></div>
<div class="a" style="left:872px;top:731px;width:14px;height:29px;background:#000;"></div>
<div class="a" style="left:886px;top:731px;width:1008px;height:29px;background:linear-gradient(#303030 0%,#2d2d2d 48%,#171717 52%,#141414 100%);"></div>
<div class="a" style="left:1894px;top:731px;width:26px;height:221px;background:#3c3c3c;"></div>
<div class="a" style="left:886px;top:760px;width:1008px;height:176px;overflow:hidden;">
<div class="a" style="left:0;top:0.0px;width:1009px;height:27.1px;background:#424242;"></div>
<span class="t" style="left:4.0px;top:6.5px;font-size:16px;color:#fff;transform:scaleX(0.891);">x: CIE31</span>
<span class="t" style="left:134.0px;top:6.5px;font-size:16px;color:#fff;transform:scaleX(0.962);">0,2857</span>
<span class="t" style="left:217.4px;top:6.5px;font-size:16px;color:#fff;transform:scaleX(0.962);">0,2928</span>
<span class="t" style="left:300.9px;top:6.5px;font-size:16px;color:#fff;transform:scaleX(0.962);">0,3000</span>
<span class="t" style="left:384.4px;top:6.5px;font-size:16px;color:#fff;transform:scaleX(0.962);">0,3037</span>
<span class="t" style="left:467.8px;top:6.5px;font-size:16px;color:#fff;transform:scaleX(0.962);">0,3027</span>
<span class="t" style="left:551.2px;top:6.5px;font-size:16px;color:#fff;transform:scaleX(0.962);">0,3032</span>
<span class="t" style="left:634.7px;top:6.5px;font-size:16px;color:#fff;transform:scaleX(0.962);">0,3030</span>
<span class="t" style="left:718.1px;top:6.5px;font-size:16px;color:#fff;transform:scaleX(0.962);">0,3036</span>
<span class="t" style="left:801.6px;top:6.5px;font-size:16px;color:#fff;transform:scaleX(0.962);">0,3050</span>
<span class="t" style="left:885.1px;top:6.5px;font-size:16px;color:#fff;transform:scaleX(0.962);">0,3061</span>
<span class="t" style="left:968.5px;top:6.5px;font-size:16px;color:#fff;transform:scaleX(0.962);">0,3119</span>
<div class="a" style="left:0;top:26.6px;width:1009px;height:27.1px;background:#808080;"></div>
<span class="t" style="left:4.0px;top:33.1px;font-size:16px;color:#e8e8e8;transform:scaleX(0.891);">y: CIE31</span>
<span class="t" style="left:134.0px;top:33.1px;font-size:16px;color:#e8e8e8;transform:scaleX(0.962);">0,2894</span>
<span class="t" style="left:217.4px;top:33.1px;font-size:16px;color:#e8e8e8;transform:scaleX(0.962);">0,2875</span>
<span class="t" style="left:300.9px;top:33.1px;font-size:16px;color:#e8e8e8;transform:scaleX(0.962);">0,3070</span>
<span class="t" style="left:384.4px;top:33.1px;font-size:16px;color:#e8e8e8;transform:scaleX(0.962);">0,3080</span>
<span class="t" style="left:467.8px;top:33.1px;font-size:16px;color:#e8e8e8;transform:scaleX(0.962);">0,3097</span>
<span class="t" style="left:551.2px;top:33.1px;font-size:16px;color:#e8e8e8;transform:scaleX(0.962);">0,3110</span>
<span class="t" style="left:634.7px;top:33.1px;font-size:16px;color:#e8e8e8;transform:scaleX(0.962);">0,3106</span>
<span class="t" style="left:718.1px;top:33.1px;font-size:16px;color:#e8e8e8;transform:scaleX(0.962);">0,3115</span>
<span class="t" style="left:801.6px;top:33.1px;font-size:16px;color:#e8e8e8;transform:scaleX(0.962);">0,3138</span>
<span class="t" style="left:885.1px;top:33.1px;font-size:16px;color:#e8e8e8;transform:scaleX(0.962);">0,3155</span>
<span class="t" style="left:968.5px;top:33.1px;font-size:16px;color:#e8e8e8;transform:scaleX(0.962);">0,3276</span>
<div class="a" style="left:0;top:53.3px;width:1009px;height:27.1px;background:#424242;"></div>
<span class="t" style="left:4.0px;top:59.8px;font-size:16px;color:#fff;transform:scaleX(0.843);">Y</span>
<span class="t" style="left:134.0px;top:59.8px;font-size:16px;color:#fff;transform:scaleX(0.962);">0,4573</span>
<span class="t" style="left:217.4px;top:59.8px;font-size:16px;color:#fff;transform:scaleX(0.962);">1,6781</span>
<span class="t" style="left:300.9px;top:59.8px;font-size:16px;color:#fff;transform:scaleX(0.962);">7,9917</span>
<span class="t" style="left:384.4px;top:59.8px;font-size:16px;color:#fff;transform:scaleX(0.962);">21,7886</span>
<span class="t" style="left:467.8px;top:59.8px;font-size:16px;color:#fff;transform:scaleX(0.962);">45,1550</span>
<span class="t" style="left:551.2px;top:59.8px;font-size:16px;color:#fff;transform:scaleX(0.962);">80,1086</span>
<span class="t" style="left:634.7px;top:59.8px;font-size:16px;color:#fff;transform:scaleX(0.962);">119,2472</span>
<span class="t" style="left:718.1px;top:59.8px;font-size:16px;color:#fff;transform:scaleX(0.962);">168,5496</span>
<span class="t" style="left:801.6px;top:59.8px;font-size:16px;color:#fff;transform:scaleX(0.962);">220,8900</span>
<span class="t" style="left:885.1px;top:59.8px;font-size:16px;color:#fff;transform:scaleX(0.962);">279,5890</span>
<span class="t" style="left:968.5px;top:59.8px;font-size:16px;color:#fff;transform:scaleX(0.962);">342,5440</span>
<div class="a" style="left:0;top:79.9px;width:1009px;height:27.1px;background:#808080;"></div>
<span class="t" style="left:4.0px;top:86.4px;font-size:16px;color:#e8e8e8;transform:scaleX(0.992);">Target Y</span>
<span class="t" style="left:134.0px;top:86.4px;font-size:16px;color:#e8e8e8;transform:scaleX(0.962);">0,0000</span>
<span class="t" style="left:217.4px;top:86.4px;font-size:16px;color:#e8e8e8;transform:scaleX(0.962);">3,5384</span>
<span class="t" style="left:300.9px;top:86.4px;font-size:16px;color:#e8e8e8;transform:scaleX(0.962);">11,3399</span>
<span class="t" style="left:384.4px;top:86.4px;font-size:16px;color:#e8e8e8;transform:scaleX(0.962);">24,7563</span>
<span class="t" style="left:467.8px;top:86.4px;font-size:16px;color:#e8e8e8;transform:scaleX(0.962);">45,5133</span>
<span class="t" style="left:551.2px;top:86.4px;font-size:16px;color:#e8e8e8;transform:scaleX(0.962);">73,9418</span>
<span class="t" style="left:634.7px;top:86.4px;font-size:16px;color:#e8e8e8;transform:scaleX(0.962);">109,1164</span>
<span class="t" style="left:718.1px;top:86.4px;font-size:16px;color:#e8e8e8;transform:scaleX(0.962);">152,5012</span>
<span class="t" style="left:801.6px;top:86.4px;font-size:16px;color:#e8e8e8;transform:scaleX(0.962);">206,8377</span>
<span class="t" style="left:885.1px;top:86.4px;font-size:16px;color:#e8e8e8;transform:scaleX(0.962);">271,0547</span>
<span class="t" style="left:968.5px;top:86.4px;font-size:16px;color:#e8e8e8;transform:scaleX(0.962);">342,5440</span>
<div class="a" style="left:0;top:106.6px;width:1009px;height:27.1px;background:#424242;"></div>
<span class="t" style="left:4.0px;top:113.1px;font-size:16px;color:#fff;">Gamma Log/Log</span>
<span class="t" style="left:134.0px;top:113.1px;font-size:16px;color:#fff;transform:scaleX(0.962);">1,3704</span>
<span class="t" style="left:217.4px;top:113.1px;font-size:16px;color:#fff;transform:scaleX(0.962);">2,3295</span>
<span class="t" style="left:300.9px;top:113.1px;font-size:16px;color:#fff;transform:scaleX(0.962);">2,3350</span>
<span class="t" style="left:384.4px;top:113.1px;font-size:16px;color:#fff;transform:scaleX(0.962);">2,2759</span>
<span class="t" style="left:467.8px;top:113.1px;font-size:16px;color:#fff;transform:scaleX(0.962);">2,2114</span>
<span class="t" style="left:551.2px;top:113.1px;font-size:16px;color:#fff;transform:scaleX(0.962);">2,1082</span>
<span class="t" style="left:634.7px;top:113.1px;font-size:16px;color:#fff;transform:scaleX(0.962);">2,0657</span>
<span class="t" style="left:718.1px;top:113.1px;font-size:16px;color:#fff;transform:scaleX(0.962);">1,9728</span>
<span class="t" style="left:801.6px;top:113.1px;font-size:16px;color:#fff;transform:scaleX(0.962);">1,9662</span>
<span class="t" style="left:885.1px;top:113.1px;font-size:16px;color:#fff;transform:scaleX(0.962);">1,9681</span>
<span class="t" style="left:968.5px;top:113.1px;font-size:16px;color:#fff;transform:scaleX(0.962);">2,2740</span>
<div class="a" style="left:0;top:133.2px;width:1009px;height:27.1px;background:#808080;"></div>
<span class="t" style="left:4.0px;top:139.7px;font-size:16px;color:#e8e8e8;transform:scaleX(0.839);">CCT</span>
<span class="t" style="left:134.0px;top:139.7px;font-size:16px;color:#e8e8e8;transform:scaleX(0.962);">9329,4852</span>
<span class="t" style="left:217.4px;top:139.7px;font-size:16px;color:#e8e8e8;transform:scaleX(0.962);">8708,8697</span>
<span class="t" style="left:300.9px;top:139.7px;font-size:16px;color:#e8e8e8;transform:scaleX(0.962);">7581,7406</span>
<span class="t" style="left:384.4px;top:139.7px;font-size:16px;color:#e8e8e8;transform:scaleX(0.962);">7298,7185</span>
<span class="t" style="left:467.8px;top:139.7px;font-size:16px;color:#e8e8e8;transform:scaleX(0.962);">7336,4691</span>
<span class="t" style="left:551.2px;top:139.7px;font-size:16px;color:#e8e8e8;transform:scaleX(0.962);">7286,3155</span>
<span class="t" style="left:634.7px;top:139.7px;font-size:16px;color:#e8e8e8;transform:scaleX(0.962);">7305,2556</span>
<span class="t" style="left:718.1px;top:139.7px;font-size:16px;color:#e8e8e8;transform:scaleX(0.962);">7247,4426</span>
<span class="t" style="left:801.6px;top:139.7px;font-size:16px;color:#e8e8e8;transform:scaleX(0.962);">7120,4202</span>
<span class="t" style="left:885.1px;top:139.7px;font-size:16px;color:#e8e8e8;transform:scaleX(0.962);">7025,7320</span>
<span class="t" style="left:968.5px;top:139.7px;font-size:16px;color:#e8e8e8;transform:scaleX(0.962);">6558,3100</span>
<div class="a" style="left:0;top:159.9px;width:1009px;height:27.1px;background:#424242;"></div>
<span class="t" style="left:4.0px;top:166.4px;font-size:16px;color:#fff;transform:scaleX(0.945);">ΔE 2000</span>
<span class="t" style="left:134.0px;top:166.4px;font-size:16px;color:#fff;transform:scaleX(0.962);">1,0376</span>
<span class="t" style="left:217.4px;top:166.4px;font-size:16px;color:#fff;transform:scaleX(0.962);">4,2616</span>
<span class="t" style="left:300.9px;top:166.4px;font-size:16px;color:#fff;transform:scaleX(0.962);">4,4530</span>
<span class="t" style="left:384.4px;top:166.4px;font-size:16px;color:#fff;transform:scaleX(0.962);">5,0895</span>
<span class="t" style="left:467.8px;top:166.4px;font-size:16px;color:#fff;transform:scaleX(0.962);">5,3037</span>
<span class="t" style="left:551.2px;top:166.4px;font-size:16px;color:#fff;transform:scaleX(0.962);">6,1307</span>
<span class="t" style="left:634.7px;top:166.4px;font-size:16px;color:#fff;transform:scaleX(0.962);">6,9561</span>
<span class="t" style="left:718.1px;top:166.4px;font-size:16px;color:#fff;transform:scaleX(0.962);">7,4234</span>
<span class="t" style="left:801.6px;top:166.4px;font-size:16px;color:#fff;transform:scaleX(0.962);">6,9727</span>
<span class="t" style="left:885.1px;top:166.4px;font-size:16px;color:#fff;transform:scaleX(0.962);">6,6902</span>
<span class="t" style="left:968.5px;top:166.4px;font-size:16px;color:#fff;transform:scaleX(0.962);">0,8090</span>
</div>
<span class="t" style="left:1020.0px;top:737.5px;font-size:16px;color:#fff;transform:scaleX(0.930);">0</span>
<span class="t" style="left:1103.5px;top:737.5px;font-size:16px;color:#fff;transform:scaleX(0.930);">10</span>
<span class="t" style="left:1186.9px;top:737.5px;font-size:16px;color:#fff;transform:scaleX(0.930);">20</span>
<span class="t" style="left:1270.3px;top:737.5px;font-size:16px;color:#fff;transform:scaleX(0.930);">30</span>
<span class="t" style="left:1353.8px;top:737.5px;font-size:16px;color:#fff;transform:scaleX(0.930);">40</span>
<span class="t" style="left:1437.2px;top:737.5px;font-size:16px;color:#fff;transform:scaleX(0.930);">50</span>
<span class="t" style="left:1520.7px;top:737.5px;font-size:16px;color:#fff;transform:scaleX(0.930);">60</span>
<span class="t" style="left:1604.2px;top:737.5px;font-size:16px;color:#fff;transform:scaleX(0.930);">70</span>
<span class="t" style="left:1687.6px;top:737.5px;font-size:16px;color:#fff;transform:scaleX(0.930);">80</span>
<span class="t" style="left:1771.1px;top:737.5px;font-size:16px;color:#fff;transform:scaleX(0.930);">90</span>
<span class="t" style="left:1854.5px;top:737.5px;font-size:16px;color:#fff;transform:scaleX(0.930);">100</span>
<div class="a" style="left:872px;top:760.0px;width:14px;height:26.6px;background:linear-gradient(90deg,#1c1c1c,#3c3c3c);border-top:1px solid #444;"></div>
<div class="a" style="left:872px;top:786.6px;width:14px;height:26.6px;background:linear-gradient(90deg,#1c1c1c,#3c3c3c);border-top:1px solid #444;"></div>
<div class="a" style="left:872px;top:813.3px;width:14px;height:26.6px;background:linear-gradient(90deg,#1c1c1c,#3c3c3c);border-top:1px solid #444;"></div>
<div class="a" style="left:872px;top:840.0px;width:14px;height:26.6px;background:linear-gradient(90deg,#1c1c1c,#3c3c3c);border-top:1px solid #444;"></div>
<div class="a" style="left:872px;top:866.6px;width:14px;height:26.6px;background:linear-gradient(90deg,#1c1c1c,#3c3c3c);border-top:1px solid #444;"></div>
<div class="a" style="left:872px;top:893.2px;width:14px;height:26.6px;background:linear-gradient(90deg,#1c1c1c,#3c3c3c);border-top:1px solid #444;"></div>
<div class="a" style="left:872px;top:919.9px;width:14px;height:17.1px;background:linear-gradient(90deg,#1c1c1c,#3c3c3c);border-top:1px solid #444;"></div>
<div class="a" style="left:886px;top:936px;width:1008px;height:17px;background:#5c5c5c;"></div>
<div class="a" style="left:903px;top:938px;width:936px;height:13px;border-radius:7px;background:#464646;"></div>
<div class="a" style="left:887px;top:937.500px;width:14px;height:14px;border-radius:3px;background:#6c6c6c;border:1px solid #808080;"></div>
<div class="a" style="left:1879.500px;top:937.500px;width:14px;height:14px;border-radius:3px;background:#6c6c6c;border:1px solid #808080;"></div>
<div class="a" style="left:1895px;top:760px;width:16px;height:177px;background:#5a5a5a;border-radius:4px;"></div>
<div class="a" style="left:1897px;top:779px;width:12px;height:118px;border-radius:6px;background:#464646;"></div>
<div class="a" style="left:1896px;top:761px;width:14px;height:15px;border-radius:3px;background:#707070;border:1px solid #808080;"></div>
<div class="a" style="left:1896px;top:921px;width:14px;height:15px;border-radius:3px;background:#707070;border:1px solid #808080;"></div>
<svg width="1920" height="1080"><path d="M1898 772 L1903 766 L1908 772 Z M1898 925 L1908 925 L1903 931 Z" fill="#303030"/><path d="M1883 940 L1883 949.500 L1890 944.700 Z" fill="#3a3a3a"/><path d="M897.500 940 L897.500 949.500 L890.500 944.700 Z" fill="#3a3a3a"/></svg>
<div class="a" style="left:251px;top:952px;width:1669px;height:81px;background:#313131;"></div>
<div class="a" style="left:250.6px;top:954px;width:113.900px;height:77px;border-radius:6px 6px 4px 4px;background:linear-gradient(#8e8e8e 0%,#7a7a7a 60%,#5e5e5e 100%);border:1px solid #555;"></div>
<div class="a" style="left:256.9px;top:960px;width:100.500px;height:47px;border-radius:5px;background:#000000;border:1.5px solid #999;"></div>
<span class="t" style="left:303.5px;top:1014.3px;font-size:13px;color:#3e3e3e;font-weight:bold;transform:scaleX(0.960);">0</span>
<div class="a" style="left:365.5px;top:954px;width:113.900px;height:77px;border-radius:6px 6px 4px 4px;background:linear-gradient(#8e8e8e 0%,#7a7a7a 60%,#5e5e5e 100%);border:1px solid #555;"></div>
<div class="a" style="left:371.8px;top:960px;width:100.500px;height:47px;border-radius:5px;background:#1c1c1c;border:1.5px solid #999;"></div>
<span class="t" style="left:415.0px;top:1014.3px;font-size:13px;color:#3e3e3e;font-weight:bold;transform:scaleX(0.960);">10</span>
<div class="a" style="left:480.4px;top:954px;width:113.900px;height:77px;border-radius:6px 6px 4px 4px;background:linear-gradient(#8e8e8e 0%,#7a7a7a 60%,#5e5e5e 100%);border:1px solid #555;"></div>
<div class="a" style="left:486.7px;top:960px;width:100.500px;height:47px;border-radius:5px;background:#353535;border:1.5px solid #999;"></div>
<span class="t" style="left:529.9px;top:1014.3px;font-size:13px;color:#3e3e3e;font-weight:bold;transform:scaleX(0.960);">20</span>
<div class="a" style="left:595.3px;top:954px;width:113.900px;height:77px;border-radius:6px 6px 4px 4px;background:linear-gradient(#8e8e8e 0%,#7a7a7a 60%,#5e5e5e 100%);border:1px solid #555;"></div>
<div class="a" style="left:601.6px;top:960px;width:100.500px;height:47px;border-radius:5px;background:#4f4f4f;border:1.5px solid #999;"></div>
<span class="t" style="left:644.8px;top:1014.3px;font-size:13px;color:#3e3e3e;font-weight:bold;transform:scaleX(0.960);">30</span>
<div class="a" style="left:710.2px;top:954px;width:113.900px;height:77px;border-radius:6px 6px 4px 4px;background:linear-gradient(#8e8e8e 0%,#7a7a7a 60%,#5e5e5e 100%);border:1px solid #555;"></div>
<div class="a" style="left:716.5px;top:960px;width:100.500px;height:47px;border-radius:5px;background:#686868;border:1.5px solid #999;"></div>
<span class="t" style="left:759.7px;top:1014.3px;font-size:13px;color:#3e3e3e;font-weight:bold;transform:scaleX(0.960);">40</span>
<div class="a" style="left:825.1px;top:954px;width:113.900px;height:77px;border-radius:6px 6px 4px 4px;background:linear-gradient(#8e8e8e 0%,#7a7a7a 60%,#5e5e5e 100%);border:1px solid #555;"></div>
<div class="a" style="left:831.4px;top:960px;width:100.500px;height:47px;border-radius:5px;background:#828282;border:1.5px solid #999;"></div>
<span class="t" style="left:874.6px;top:1014.3px;font-size:13px;color:#3e3e3e;font-weight:bold;transform:scaleX(0.960);">50</span>
<div class="a" style="left:940.0px;top:954px;width:113.900px;height:77px;border-radius:6px 6px 4px 4px;background:linear-gradient(#8e8e8e 0%,#7a7a7a 60%,#5e5e5e 100%);border:1px solid #555;"></div>
<div class="a" style="left:946.3px;top:960px;width:100.500px;height:47px;border-radius:5px;background:#9b9b9b;border:1.5px solid #999;"></div>
<span class="t" style="left:989.5px;top:1014.3px;font-size:13px;color:#3e3e3e;font-weight:bold;transform:scaleX(0.960);">60</span>
<div class="a" style="left:1054.9px;top:954px;width:113.900px;height:77px;border-radius:6px 6px 4px 4px;background:linear-gradient(#8e8e8e 0%,#7a7a7a 60%,#5e5e5e 100%);border:1px solid #555;"></div>
<div class="a" style="left:1061.2px;top:960px;width:100.500px;height:47px;border-radius:5px;background:#b4b4b4;border:1.5px solid #999;"></div>
<span class="t" style="left:1104.4px;top:1014.3px;font-size:13px;color:#3e3e3e;font-weight:bold;transform:scaleX(0.960);">70</span>
<div class="a" style="left:1169.8px;top:954px;width:113.900px;height:77px;border-radius:6px 6px 4px 4px;background:linear-gradient(#8e8e8e 0%,#7a7a7a 60%,#5e5e5e 100%);border:1px solid #555;"></div>
<div class="a" style="left:1176.1px;top:960px;width:100.500px;height:47px;border-radius:5px;background:#cdcdcd;border:1.5px solid #999;"></div>
<span class="t" style="left:1219.3px;top:1014.3px;font-size:13px;color:#3e3e3e;font-weight:bold;transform:scaleX(0.960);">80</span>
<div class="a" style="left:1284.7px;top:954px;width:113.900px;height:77px;border-radius:6px 6px 4px 4px;background:linear-gradient(#8e8e8e 0%,#7a7a7a 60%,#5e5e5e 100%);border:1px solid #555;"></div>
<div class="a" style="left:1291.0px;top:960px;width:100.500px;height:47px;border-radius:5px;background:#e6e6e6;border:1.5px solid #999;"></div>
<span class="t" style="left:1334.2px;top:1014.3px;font-size:13px;color:#3e3e3e;font-weight:bold;transform:scaleX(0.960);">90</span>
<div class="a" style="left:1399.6px;top:954px;width:113.900px;height:77px;border-radius:6px 6px 4px 4px;background:linear-gradient(#5a5a5a,#333);border:1px solid #555;"></div>
<div class="a" style="left:1405.9px;top:960px;width:100.500px;height:47px;border-radius:5px;background:#ffffff;border:1.5px solid #ddd;"></div>
<span class="t" style="left:1445.6px;top:1014.3px;font-size:13px;color:#e4e4e4;font-weight:bold;transform:scaleX(0.960);">100</span>
<div class="a" style="left:1516px;top:954px;width:60px;height:24px;border-radius:6px 6px 0 0;background:linear-gradient(#9a9a9a 0%,#888 30%,#6c6c6c 100%);border:1px solid #484848;"></div>
<div class="a" style="left:1516px;top:978px;width:60px;height:53px;border-radius:0 0 4px 4px;background:linear-gradient(#9a9a9a 0%,#888 30%,#6c6c6c 100%);border:1px solid #484848;"></div>
<div class="a" style="left:1537px;top:956px;width:18px;height:18px;border-radius:50%;background:linear-gradient(#646464,#8a8a8a);"></div>
<div class="a" style="left:1526px;top:985px;width:40px;height:40px;border-radius:6px;background:linear-gradient(#9a9a9a 0%,#8e8e8e 49%,#7a7a7a 51%,#848484 100%);border:3px solid #1c1c1c;box-shadow:0 0 0 1px #aaa;"></div>
<div class="a" style="left:1537px;top:996px;width:18px;height:18px;background:#000;"></div>
<svg width="1920" height="1080"><path d="M1539.5 968 L1546 961 L1552.5 968 Z" fill="#222"/></svg>
<div class="a" style="left:1577px;top:954px;width:58px;height:38px;border-radius:6px 0 0 0;background:linear-gradient(#9a9a9a 0%,#888 30%,#6c6c6c 100%);border:1px solid #484848;"></div>
<div class="a" style="left:1593.0px;top:960px;width:26px;height:26px;border-radius:50%;background:linear-gradient(#646464 0%,#727272 50%,#929292 100%);"></div>
<div class="a" style="left:1635px;top:954px;width:56px;height:38px;border-radius:0;background:linear-gradient(#9a9a9a 0%,#888 30%,#6c6c6c 100%);border:1px solid #484848;"></div>
<div class="a" style="left:1650.0px;top:960px;width:26px;height:26px;border-radius:50%;background:linear-gradient(#646464 0%,#727272 50%,#929292 100%);"></div>
<div class="a" style="left:1691px;top:954px;width:56px;height:38px;border-radius:0;background:linear-gradient(#9a9a9a 0%,#888 30%,#6c6c6c 100%);border:1px solid #484848;"></div>
<div class="a" style="left:1706.0px;top:960px;width:26px;height:26px;border-radius:50%;background:linear-gradient(#646464 0%,#727272 50%,#929292 100%);"></div>
<div class="a" style="left:1747px;top:954px;width:57px;height:38px;border-radius:0;background:linear-gradient(#9a9a9a 0%,#888 30%,#6c6c6c 100%);border:1px solid #484848;"></div>
<div class="a" style="left:1762.5px;top:960px;width:26px;height:26px;border-radius:50%;background:linear-gradient(#646464 0%,#727272 50%,#929292 100%);"></div>
<div class="a" style="left:1804px;top:954px;width:56px;height:38px;border-radius:0;background:linear-gradient(#9a9a9a 0%,#888 30%,#6c6c6c 100%);border:1px solid #484848;"></div>
<div class="a" style="left:1819.0px;top:960px;width:26px;height:26px;border-radius:50%;background:linear-gradient(#646464 0%,#727272 50%,#929292 100%);"></div>
<div class="a" style="left:1860px;top:954px;width:60px;height:38px;background:linear-gradient(#3c3c3c,#303030);"></div>
<div class="a" style="left:1876px;top:961px;width:26px;height:26px;border-radius:50%;background:linear-gradient(#262626,#303030);"></div>
<svg width="1920" height="1080"><rect x="1600.5" y="967.5" width="11" height="11" rx="1" fill="#2a2a2a"/><path d="M1659 966.5 L1659 980.5 L1670 973.5 Z" fill="#2a2a2a"/><path d="M1714.5 967 h-3 v13 h3 M1724 967 h3 v13 h-3" stroke="#2a2a2a" stroke-width="2" fill="none"/><path d="M1715 973.5 h9" stroke="#2a2a2a" stroke-width="2" stroke-dasharray="2 1.5"/><path d="M1775.5 973 c-2 -3.5 -7 -3.5 -7 0 c0 3.500 5 3.500 7 0 c2 -3.500 7 -3.500 7 0 c0 3.500 -5 3.500 -7 0 Z" stroke="#2a2a2a" stroke-width="2" fill="none"/><path d="M1826 971 a6.500 6.500 0 0 1 11.500 -2.500 M1838 975.500 a6.500 6.500 0 0 1 -11.500 2.500" stroke="#2a2a2a" stroke-width="2.4" fill="none"/><path d="M1839.500 964.500 v6 h-6 Z M1824.500 982 v-6 h6 Z" fill="#2a2a2a"/></svg>
<div class="a" style="left:1577px;top:993px;width:171px;height:38px;border-radius:0 0 0 4px;background:linear-gradient(#9a9a9a 0%,#888 30%,#6c6c6c 100%);border:1px solid #484848;"></div>
<div class="a" style="left:1748px;top:993px;width:172px;height:38px;background:linear-gradient(#9a9a9a 0%,#888 30%,#6c6c6c 100%);border:1px solid #484848;"></div>
<div class="a" style="left:1604px;top:999px;width:24px;height:24px;border-radius:50%;background:linear-gradient(#646464 0%,#727272 50%,#929292 100%);"></div>
<div class="a" style="left:1871px;top:999px;width:24px;height:24px;border-radius:50%;background:linear-gradient(#646464 0%,#727272 50%,#929292 100%);"></div>
<span class="t" style="left:1608.8px;top:997.0px;font-size:26px;color:#333;">«</span>
<span class="t" style="left:1875.8px;top:997.0px;font-size:26px;color:#333;">»</span>
<span class="t" style="left:1648.7px;top:997.5px;font-size:29px;color:#3a3a3a;font-weight:bold;transform:scaleX(0.916);text-shadow:0 1px 0 #999;">Back</span>
<span class="t" style="left:1782.0px;top:997.5px;font-size:29px;color:#3a3a3a;font-weight:bold;transform:scaleX(1.026);text-shadow:0 1px 0 #999;">Next</span>
<div class="a" style="left:0;top:1032px;width:1920px;height:48px;background:#59674e;background-image:repeating-linear-gradient(45deg,rgba(0,0,0,.028) 0 1.5px,rgba(0,0,0,0) 1.5px 8px);"></div>
<svg width="1920" height="1080">
<path d="M13.8 1044 L28 1041.600 L28 1054.800 L13.800 1054.800 Z M29.600 1041.300 L46.200 1038.800 L46.200 1054.800 L29.600 1054.800 Z M13.800 1056.300 L28 1056.300 L28 1069.400 L13.800 1067.200 Z M29.600 1056.300 L46.200 1056.300 L46.200 1072 L29.600 1069.600 Z" fill="#fff"/>
<defs><linearGradient id="fdg" x1="0" x2="0" y1="0" y2="1"><stop offset="0" stop-color="#a4dcf8"/><stop offset="1" stop-color="#3c94dc"/></linearGradient><linearGradient id="fyg" x1="0" x2="0" y1="0" y2="1"><stop offset="0" stop-color="#fbe9a4"/><stop offset="1" stop-color="#f0cc68"/></linearGradient></defs>
<path d="M78 1042 q0 -3 3 -3 h9 l3 2 h8 l3 2 h9 q3 0 3 3 v24 q0 3 -3 3 h-32 q-3 0 -3 -3 Z" fill="#e4c058"/>
<rect x="86" y="1038.500" width="12" height="4" fill="#f4f0e0"/><rect x="94" y="1040.500" width="12" height="4" fill="#f8f4e8"/><rect x="101" y="1042.500" width="13" height="4" fill="#fff"/>
<rect x="87" y="1038.500" width="2.500" height="2.500" fill="#30a040"/><rect x="95.500" y="1040.800" width="2.500" height="2.500" fill="#d03828"/><rect x="102.500" y="1043" width="2.500" height="2.500" fill="#3068c8"/>
<path d="M78 1047 h38 v23 q0 3 -3 3 h-32 q-3 0 -3 -3 Z" fill="url(#fyg)"/>
<path d="M82.500 1074 v-12 q0 -3 3 -3 h23 q3 0 3 3 v12 h-7 v-6.500 h-15 v6.500 Z" fill="url(#fdg)"/>
<defs><linearGradient id="ieg" x1="0" x2="0" y1="0" y2="1"><stop offset="0" stop-color="#6cd0f8"/><stop offset="1" stop-color="#1c90e0"/></linearGradient></defs>
<path d="M182.500 1057.500 A12.500 12.500 0 1 0 178.500 1066" fill="none" stroke="url(#ieg)" stroke-width="7.500"/><rect x="160" y="1053.500" width="26" height="5.500" fill="#38a8e8"/>
<path d="M152.500 1070 C146 1062 168 1036 186 1038.500" fill="none" stroke="#f0c020" stroke-width="2.800"/><path d="M152.500 1070 C158 1074 170 1066 174 1062" fill="none" stroke="#e8b018" stroke-width="2.400"/><path d="M186 1038.500 C190 1040 189 1046 186 1050" fill="none" stroke="#e8b018" stroke-width="2.400"/>
<rect x="224" y="1037" width="37.500" height="38" fill="#0c8c0c"/>
<path d="M231.500 1049.500 a6.800 7.200 0 0 1 13.600 -1.500 M236.500 1049 a6 6 0 0 1 3 -7" fill="none" stroke="#fff" stroke-width="1.300"/>
<path d="M227.900 1050.600 L249.600 1047.200 L254.900 1046.500 L254.900 1069.200 L249.750 1071 L227.900 1066.300 Z" fill="#fff"/>
<path d="M232 1054.600 l5.400 -0.700 v4.600 l-5.400 0.100 Z M238.400 1053.800 l6.300 -0.800 v5.400 l-6.300 0.100 Z M232 1059.600 l5.400 0 v4.500 l-5.400 -0.800 Z M238.400 1059.600 l6.300 0 v5.600 l-6.300 -0.900 Z" fill="#0c8c0c"/>
<rect x="297.200" y="1038.200" width="35.300" height="36" rx="4.500" fill="#7c38b4"/>
<circle cx="315" cy="1046" r="5" fill="#6c2ca0"/><circle cx="308" cy="1050" r="5" fill="#6c2ca0"/><circle cx="322" cy="1050" r="5" fill="#6c2ca0"/>
<rect x="302.600" y="1046.600" width="15.400" height="15.300" fill="#fff"/><path d="M308 1050.300 v7.600 l6 -3.800 Z" fill="#7c38b4"/><path d="M303.500 1048 h14 M303.500 1060.500 h14" stroke="#7c38b4" stroke-width="1.200" stroke-dasharray="1.300 1.200"/>
<path d="M315.800 1053.200 L326.700 1049.900 L326.700 1062.600 M315.800 1053.200 L315.800 1065.500" fill="none" stroke="#fff" stroke-width="1.800"/><path d="M315 1053.600 L327.500 1049.800 L327.500 1052.600 L315 1056.400 Z" fill="#fff"/><ellipse cx="313.600" cy="1065.700" rx="3" ry="2.600" fill="#fff"/><ellipse cx="324.300" cy="1062.800" rx="3" ry="2.600" fill="#fff"/>
<rect x="370" y="1038" width="36" height="36" rx="5" fill="#f06020"/>
<rect x="377.500" y="1048" width="19" height="18" rx="1.500" fill="#f06020" stroke="#fbd8c4" stroke-width="1.800" transform="rotate(-7 387 1057)"/><rect x="380.500" y="1046.500" width="19.500" height="18.500" rx="1.500" fill="#e85818" stroke="#fff" stroke-width="2"/><path d="M383.500 1061.500 l4.500 -6 l3 3 l2.500 -2 l3.500 5 Z" fill="#fff"/><circle cx="394.500" cy="1051.500" r="1.500" fill="#fff"/>
<path d="M441 1058 L461 1040 L480 1058 L475 1058 L475 1073 L465 1073 L465 1062 L457 1062 L457 1073 L447 1073 L447 1058 Z" fill="#fff" stroke="#444" stroke-width="0.800"/>
<defs><linearGradient id="lfg" x1="0" x2="0" y1="0" y2="1"><stop offset="0" stop-color="#fff"/><stop offset="0.500" stop-color="#f4f4f4"/><stop offset="0.520" stop-color="#e4e4e4"/><stop offset="1" stop-color="#f0f0f0"/></linearGradient></defs>
<rect x="514" y="1036" width="40" height="39" fill="url(#lfg)"/>
<text x="519.5" y="1054.2" font-size="17.5" fill="#c8301c" text-anchor="start" textLength="27.5" lengthAdjust="spacingAndGlyphs" font-weight="bold">LOVE</text>
<text x="519.5" y="1070.2" font-size="17" fill="#181818" text-anchor="start" textLength="27.5" lengthAdjust="spacingAndGlyphs" font-weight="bold">FiLM</text>
<defs><linearGradient id="spg" x1="0" x2="0" y1="0" y2="1"><stop offset="0" stop-color="#b4d030"/><stop offset="1" stop-color="#7ca810"/></linearGradient></defs>
<circle cx="606.600" cy="1056" r="18.400" fill="url(#spg)"/>
<path d="M596 1050.500 q12 -5 24 1.500" fill="none" stroke="#141414" stroke-width="3.200" stroke-linecap="round"/><path d="M597 1057 q11 -4 21 1.500" fill="none" stroke="#141414" stroke-width="2.600" stroke-linecap="round"/><path d="M598 1063 q9 -3 18 1" fill="none" stroke="#141414" stroke-width="2" stroke-linecap="round"/>
<defs><radialGradient id="dcg" cx="0.500" cy="0.500" r="0.600"><stop offset="0" stop-color="#f8a818"/><stop offset="1" stop-color="#d87808"/></radialGradient></defs>
<rect x="662" y="1039" width="36" height="35.500" rx="8" fill="url(#dcg)" stroke="#4c4434" stroke-width="2.400"/>
<path d="M671 1048 l10 -2 v20 l-10 2 Z" fill="#e8dcb0"/><path d="M674 1046.500 l11 -2 v21 l-11 2 Z" fill="#f8f0d8"/><path d="M677 1044.500 l11 1.500 v19.500 l-11 2 Z" fill="#fff8e8" stroke="#c8b888" stroke-width="0.600"/><path d="M679.500 1050 l6 0.800 M679.500 1054 l6 0.500 M679.500 1058 l6 0.200" stroke="#d8b030" stroke-width="1.600"/>
<path d="M735 1060 q-1 -8 10 -12 q14 -5 22 2 q7 7 -2 17 q-6 6 -14 7 q-5 0 -4 -4 q1 -4 -4 -4 q-8 0 -8 -6 Z" fill="#b4d8f0" stroke="#7098c0" stroke-width="1"/>
<circle cx="740.500" cy="1057" r="2.600" fill="#d83828"/><circle cx="746.500" cy="1051" r="2.600" fill="#48a838"/><circle cx="754" cy="1048.500" r="2.600" fill="#e8a020"/><circle cx="749.500" cy="1059.500" r="2" fill="#586878"/>
<path d="M755 1073 L765 1047" stroke="#e08828" stroke-width="2.600"/><path d="M763.500 1048 l0.500 -9 l7 3 l-4.500 7.500 Z" fill="#e8c088"/>
<defs><linearGradient id="hig" x1="0" x2="0" y1="0" y2="1"><stop offset="0" stop-color="#a8d8f4"/><stop offset="0.450" stop-color="#58a8dc"/><stop offset="0.500" stop-color="#1c80c4"/><stop offset="1" stop-color="#1c74b4"/></linearGradient><clipPath id="hic"><rect x="808" y="1038" width="36" height="36" rx="6"/></clipPath></defs>
<g clip-path="url(#hic)"><rect x="808" y="1038" width="36" height="20.500" fill="url(#hig)"/><rect x="808" y="1058" width="36" height="16" fill="#14181c"/></g>
<path d="M816 1041 h4.300 v15 h-4.300 Z M824 1045.500 h4 v10.500 h-4 Z" fill="#fff"/><circle cx="833.600" cy="1053.400" r="2.300" fill="#fff"/>
<path d="M816 1060 h4.300 v10 q-3 -1 -4.300 -4 Z M823 1060 h5.500 v11 h-5.500 Z M831 1060 h5.200 v6 q-1.500 3 -5.200 4.200 Z" fill="#fff"/>
<rect x="866" y="1033.500" width="63" height="45" fill="#9ea196" stroke="#ecece0" stroke-width="1.300"/><rect x="930.500" y="1033.500" width="3.500" height="45" fill="#8c9484" stroke="#e4e4d8" stroke-width="1"/>
<defs><radialGradient id="cm" cx="0.550" cy="0.600" r="0.650"><stop offset="0" stop-color="#203818"/><stop offset="0.250" stop-color="#181010"/><stop offset="0.600" stop-color="#a01828"/><stop offset="1" stop-color="#e02010"/></radialGradient></defs>
<path d="M882.500 1037 Q879 1050 883 1064 Q885 1071 888.500 1075 L914.500 1062.500 Q898 1042 886 1036.500 Q883.500 1035.500 882.500 1037 Z" fill="url(#cm)" stroke="#181008" stroke-width="1.200"/>
<path d="M884 1040 Q882 1052 886 1060 L895 1052 Q890 1044 884 1040 Z" fill="#e83810" opacity="0.850"/><path d="M893 1066 l8 -3 l-3 6 Z" fill="#187018" opacity="0.800"/><path d="M900 1056 l8 3 l-7 3 Z" fill="#c01040" opacity="0.800"/>
<text x="890.5" y="1065.0" font-size="15" fill="#0c0c0c" text-anchor="start" font-weight="bold">5</text>
<rect x="1579" y="1047.500" width="18.500" height="18.500" fill="#2c2c2c" stroke="#aaa" stroke-width="1"/><path d="M1581 1051 h14.500 M1581 1054 h14.500 M1581 1057 h14.500 M1581 1060 h14.500 M1581 1063 h14.500" stroke="#909090" stroke-width="1.200"/>
<rect x="1608.500" y="1047.500" width="18.500" height="18.500" rx="2" fill="#303030" stroke="#808080" stroke-width="1"/><path d="M1611.500 1057 q6 -7 12.500 -1.500 q-6 7.500 -12.500 1.500 Z M1615 1056.500 q3 -3 6 0" fill="none" stroke="#76b900" stroke-width="1.800"/>
<rect x="1638" y="1047" width="20" height="20" rx="2.500" fill="#1c88d8"/><rect x="1641" y="1050.500" width="10" height="7.500" fill="#a8d8f8" stroke="#e8f4fc" stroke-width="0.800"/><rect x="1646" y="1056.500" width="9.500" height="7" fill="#d8ecfc" stroke="#fff" stroke-width="0.800"/><path d="M1638.500 1063 l4 4 h-2 q-2 0 -2 -2 Z" fill="#e8c040"/>
<rect x="1668" y="1048.500" width="20" height="16.500" fill="#183c90"/><path d="M1671.600 1052.500 h2 a4.200 4.250 0 0 1 0 8.500 h-2 Z M1686 1052.500 h-2 a4.200 4.250 0 0 0 0 8.500 h2 Z" fill="#fff"/>
<rect x="1707" y="1049" width="10.500" height="18" rx="1.500" fill="#fff"/><rect x="1709.500" y="1052" width="5.500" height="12.500" fill="#58664d"/><rect x="1710" y="1047" width="4.500" height="2.500" fill="#fff"/><path d="M1702.500 1050 v4 M1699.500 1050 v4 M1698.500 1054 h5 v3 q0 2 -2.500 2 q-2.500 0 -2.500 -2 Z M1701 1059 v8" stroke="#fff" stroke-width="1.300" fill="#fff"/>
<path d="M1731 1048 v20" stroke="#fff" stroke-width="2"/><path d="M1732.500 1049 q4 -2 7.500 0 q4 2 8 0 v10 q-4 2 -8 0 q-3.500 -2 -7.500 0 Z" fill="#fff"/>
<path d="M1759 1066 v-3 M1762.500 1066 v-6 M1766 1066 v-9 M1769.500 1066 v-13 M1773 1066 v-17" stroke="#aaa" stroke-width="2"/><circle cx="1772.500" cy="1063" r="5.500" fill="#d82020"/><path d="M1770 1060.500 l5 5 M1775 1060.500 l-5 5" stroke="#fff" stroke-width="1.600"/>
<path d="M1790 1054 h4 l6 -6 v20 l-6 -6 h-4 Z" fill="#fff"/><path d="M1803.500 1053 q3 5 0 10" fill="none" stroke="#fff" stroke-width="1.400"/>
</svg>
<span class="t" style="left:1847.8px;top:1039.7px;font-size:14.5px;color:#fff;transform:scaleX(0.923);">17:23</span>
<span class="t" style="left:1829.0px;top:1061.2px;font-size:14.5px;color:#fff;transform:scaleX(0.965);">06.10.2014</span>
</body></html>
